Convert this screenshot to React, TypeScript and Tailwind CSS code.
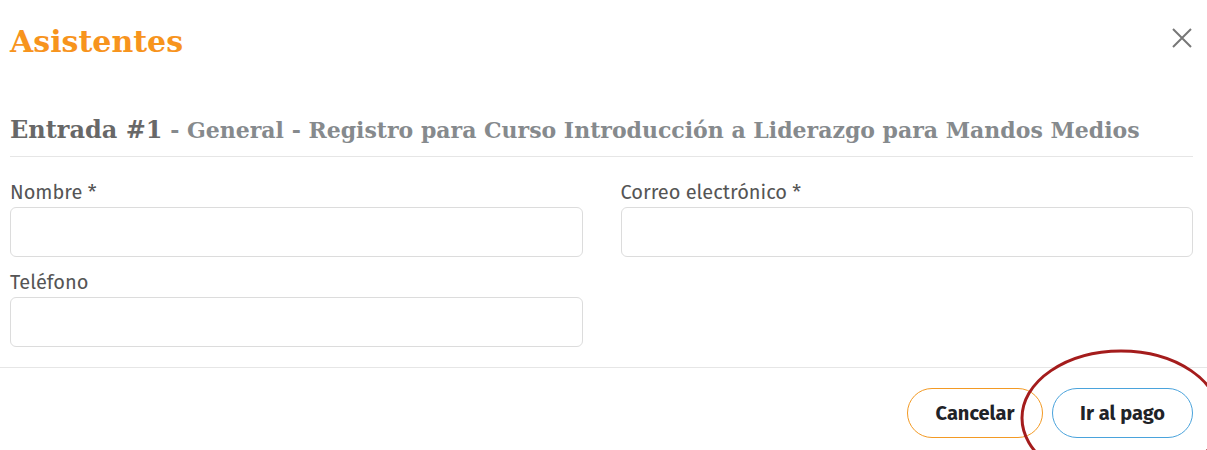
import React from "react";

const slab = { fontFamily: '"Roboto Slab", "DejaVu Serif", serif' };
const sans = { fontFamily: '"Fira Sans", Lato, "Open Sans", sans-serif' };

function Field({ label }: { label: string }) {
  return (
    <div className="flex flex-col">
      <label className="text-[20px] leading-[24px] text-[#555] mb-[3px]" style={sans}>
        {label}
      </label>
      <div className="h-[50px] rounded-[6px] border border-[#dcdcdc] bg-white" />
    </div>
  );
}

export default function App() {
  return (
    <div className="relative w-[1207px] h-[450px] bg-white overflow-hidden" style={sans}>
      <div className="pl-[10px] pr-[14px]">
        <div className="flex items-center justify-between h-[80px]">
          <h1 className="text-[30px] leading-[36px] font-bold text-[#f7941d] mt-[4px]" style={slab}>
            Asistentes
          </h1>
          <svg width="22" height="22" viewBox="0 0 22 22" className="mb-[4px]">
            <path d="M2 2 L20 20 M20 2 L2 20" stroke="#777" strokeWidth="2" fill="none" />
          </svg>
        </div>
        <div className="pt-[34px] pb-[10px] border-b border-[#e6e6e6] whitespace-nowrap" style={slab}>
          <span className="text-[24px] leading-[32px] font-bold text-[#686868]">Entrada #1</span>
          <span className="text-[22px] leading-[32px] font-bold text-[#868a8d]">
            {" "}- General - Registro para Curso Introducción a Liderazgo para Mandos Medios
          </span>
        </div>
        <div className="grid grid-cols-2 gap-x-[38px] gap-y-[13px] pt-[23px]">
          <Field label="Nombre *" />
          <Field label="Correo electrónico *" />
          <Field label="Teléfono" />
        </div>
      </div>
      <div className="mt-[20px] border-t border-[#e6e6e6] flex justify-end gap-[9px] pr-[14px] pt-[20px]">
        <button
          className="h-[50px] w-[136px] rounded-full border border-[#f39a24] bg-white text-[20px] font-bold text-[#1f2328]"
          style={sans}
        >
          Cancelar
        </button>
        <button
          className="h-[50px] w-[141px] rounded-full border border-[#4aa3dc] bg-white text-[20px] font-bold text-[#1f2328]"
          style={sans}
        >
          Ir al pago
        </button>
      </div>
      <svg className="absolute left-0 top-0 pointer-events-none" width="1207" height="450">
        <ellipse cx="1121" cy="418" rx="99" ry="67" fill="none" stroke="#a41c1c" strokeWidth="3" />
      </svg>
    </div>
  );
}
